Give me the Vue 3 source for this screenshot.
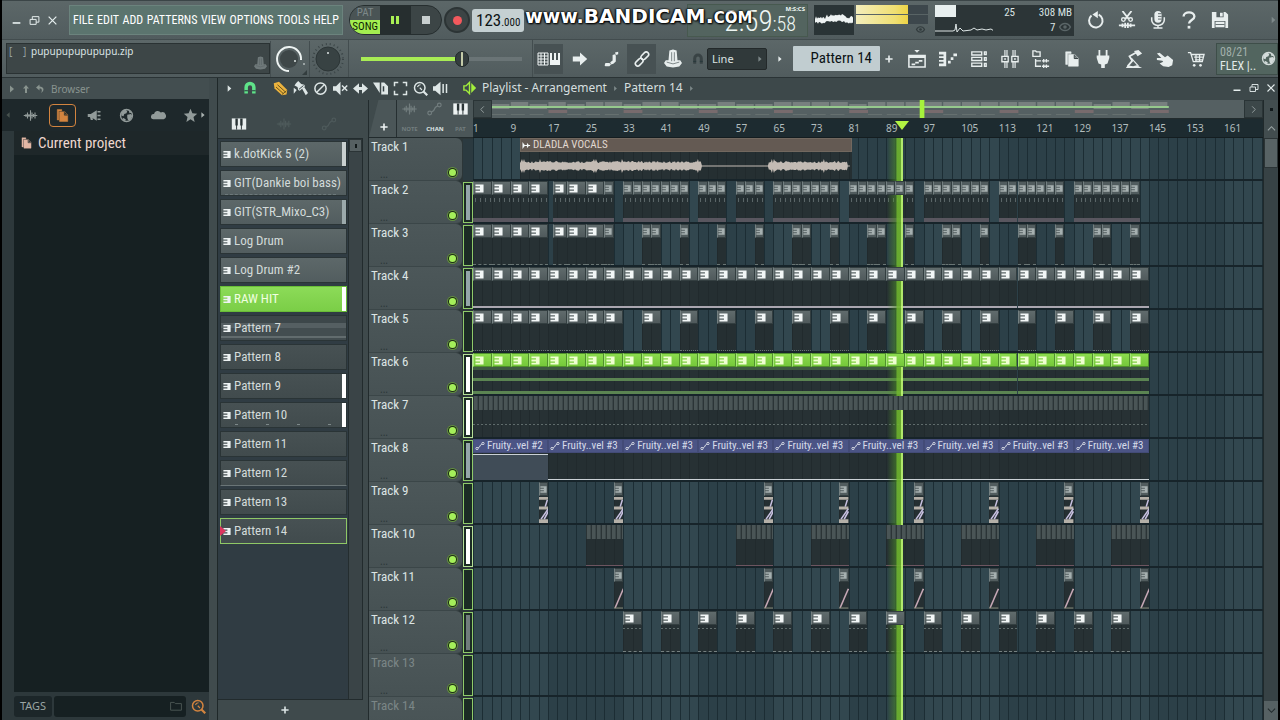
<script setup>
import { h } from 'vue'

const icons = {
  wave: '<path d="M1 10h18M4 8v4M6 6v8M8 8v4M10 3v14M12 6v8M14 8v4M16 6v8" fill="none" stroke="currentColor" stroke-width="1.5"/>',
  files: '<path d="M3 2h6v2H5v12H3zM6 5h7l4 4v9H6zM13 5v4h4" fill="currentColor" stroke="currentColor" stroke-width=".6"/><path d="M12.500 5v4.500H17" fill="none" stroke="#1e292b"/>',
  plugSpk: '<path d="M1 8h4l8-5v14l-8-5H1zM4 12h3l1 4H5zM14 4h4v2h-4zM14 9h4v2h-4zM14 14h4v2h-4z" fill="currentColor"/>',
  globe: '<circle cx="10" cy="10" r="8" fill="none" stroke="currentColor" stroke-width="1.800"/><path d="M3 6l5-4 3 2-1 3-3 1-1 3-3-1zM11 9l5-1 2 3-4 6-2-1-1-3zM13 3l4 3-3 1zM5 13l4 2-1 3-3-3z" fill="currentColor"/>',
  cloud: '<path d="M3 15a3.500 3.500 0 0 1 1-7 5 5 0 0 1 9-2 4.500 4.500 0 0 1 4 9z" fill="currentColor"/>',
  star: '<path d="M10 1l2.500 6 6.500.5-5 4.500 1.500 6.500L10 15l-5.500 3.500L6 12 1 7.500 7.500 7z" fill="currentColor"/>',
  piano: '<path d="M1 3h18v14H1z" fill="currentColor"/><path d="M7 11v6M13 11v6" stroke="#2a3436" stroke-width="1.200"/><path d="M5.500 3h3v9h-3zM11.500 3h3v9h-3z" fill="#2a3436"/>',
  auto: '<circle cx="4" cy="15" r="2.300" fill="none" stroke="currentColor" stroke-width="1.500"/><circle cx="16" cy="5" r="2.300" fill="none" stroke="currentColor" stroke-width="1.500"/><path d="M6 14l3-2 2-4 3-2" fill="none" stroke="currentColor" stroke-width="1.500"/>',
  up: '<path d="M10 2l6 7h-4v9H8V9H4z" fill="currentColor"/>',
  undo: '<path d="M9 1L2 7l7 6V9c5 0 6 4 3 9 8-5 6-13-3-13z" fill="currentColor"/>',
  play: '<path d="M6 3l8 7-8 7z" fill="currentColor"/>',
  left: '<path d="M14 3l-8 7 8 7z" fill="currentColor"/>',
  magnet: '<path d="M2 18V9a8 8 0 0 1 16 0v9h-5V9a3 3 0 0 0-6 0v9z" fill="currentColor"/><path d="M2 14h5M13 14h5" stroke="#26383a" stroke-width="1.500"/>',
  pencil: '<path d="M1 3l7-2 11 11-1 6-6 1L2 10z" fill="currentColor"/><path d="M4 8l10 9M6 5l11 10M12 18l6-5" stroke="#5a4a18" stroke-width="1.200"/>',
  brush: '<path d="M4 3l3-3 4 4 4 1 1 2-7 6-2-1-1-4-4-2z" fill="currentColor"/><path d="M12 10l3-2 5 8-3 3zM1 9l4 3-4 5z" fill="currentColor"/><path d="M8 11l6-5" stroke="#3d484a" stroke-width="1.300"/>',
  ban: '<circle cx="10" cy="10" r="7.500" fill="none" stroke="currentColor" stroke-width="2"/><path d="M5 15L15 5" stroke="currentColor" stroke-width="2"/>',
  mute: '<path d="M0 7h4l6-6v18l-6-6H0z" fill="currentColor"/><path d="M12 6l7 7M19 6l-7 7" stroke="currentColor" stroke-width="2"/>',
  slip: '<path d="M0 10l8-7v5h4V3l8 7-8 7v-5H8v5z" fill="currentColor"/>',
  slice: '<path d="M0 2h9v14zM11 2h4l5 5v11h-9z" fill="currentColor"/><path d="M14 7v7" stroke="#333f42" stroke-width="2"/>',
  select: '<path d="M2 7V2h5M13 2h5v5M18 13v5h-5M7 18H2v-5" fill="none" stroke="currentColor" stroke-width="2"/>',
  zoom: '<circle cx="9" cy="9" r="7" fill="none" stroke="currentColor" stroke-width="2"/><path d="M14 14l5 5" stroke="currentColor" stroke-width="3"/><path d="M6 8a4 4 0 0 1 4-3M12 12L9 9" fill="none" stroke="currentColor" stroke-width="1.500"/>',
  playback: '<path d="M0 7h3l7-6v18l-7-6H0zM12.500 4h2v12h-2zM17 4h2v12h-2z" fill="currentColor"/>',
  speaker: '<path d="M2 7h3l5-5v16l-5-5H2z" fill="none" stroke="currentColor" stroke-width="2"/><path d="M12.500 3l7 7-7 7z" fill="currentColor"/>',
  arrow: '<path d="M1 7h9V2l9 8-9 8v-5H1z" fill="currentColor"/>',
  slide: '<path d="M2 18l1-3h5l2 2-2 2H3zM10 17l-1-3 3-2V5l3-1 1 2v7l-3 3zM15 2l4-1v3l-3 1z" fill="currentColor"/>',
  link: '<g fill="none" stroke="currentColor" stroke-width="2"><rect x="8" y="3" width="11" height="6" rx="3" transform="rotate(-45 13.500 6)"/><rect x="1" y="11" width="11" height="6" rx="3" transform="rotate(-45 6.500 14)"/></g>',
  stamp: '<path d="M6 1l4-1 4 1 1 11h3l2 3-3 4-7 1-7-1-3-4 2-3h3z" fill="currentColor"/><path d="M8.500 3v10M11.500 3v10M3 14l7 2 7-2" fill="none" stroke="#566163" stroke-width=".8"/>',
  playlist: '<path d="M7 0h6l-3 3z" fill="currentColor"/><path d="M1 6h18v13H1z" fill="none" stroke="currentColor" stroke-width="1.700"/><path d="M1 6h18v3H1zM4 15h4v2H4zM8 13h4v2H8zM12 11h4v2h-4z" fill="currentColor"/>',
  roll: '<path d="M0 2h8v16H0v-3h5v-2H0v-2h5V9H0V7h5V5H0zM10 12h3v3h-3zM13 8h3v3h-3zM16 4h4v3h-4z" fill="currentColor"/>',
  rack: '<path d="M2 2h11v3.500H2zM2 8.200h11v3.500H2zM2 14.500h11V18H2zM16 2h2v3h-2zM16 8.500h2v3h-2zM16 15h2v3h-2z" fill="none" stroke="currentColor" stroke-width="1.500"/>',
  mixer: '<path d="M5.500 0v20M14.500 0v20" stroke="currentColor" stroke-width="3.600"/><path d="M5.500 0v20M14.500 0v20" stroke="#566163" stroke-width="1"/><path d="M1 7h7v6H1zM12 7h7v6h-7z" fill="#566163" stroke="currentColor" stroke-width="1.500"/><path d="M4.500 9v2M15.500 9v2" stroke="currentColor" stroke-width="1.500"/>',
  tree: '<path d="M1 1h3l1 1h4v5H1zM4 10v8h6M4 12h6M11 12h8M11 18h8M13 10v4M16 10v4M13 16v4M16 16v4" fill="none" stroke="currentColor" stroke-width="1.500"/>',
  plug: '<path d="M5 0h2v6h6V0h2v6h2v3l-2 6-3 1v4H8v-4l-3-1-2-6V6h2z" fill="currentColor"/>',
  lamp: '<path d="M12 3L5 7l3 5-5 6" fill="none" stroke="currentColor" stroke-width="2"/><path d="M10 1l5-1 4 4-5 3zM1 20l2-3 6 1 4-1 6 3z" fill="currentColor"/><path d="M7 9l8 9" stroke="currentColor" stroke-width="1.300"/>',
  hand: '<path d="M1 4l3-1 6 5 3-2 6 5-1 6-4 2-6-1-4-3 4-2-1-1-6-1v-2l5 0z" fill="currentColor"/>',
  cart: '<path d="M1 3h3l3 10h10l2-8H5M8 8h10M9 11h8M10 5v8M14 5v8" fill="none" stroke="currentColor" stroke-width="1.400"/><circle cx="8" cy="17" r="1.500" fill="currentColor"/><circle cx="15" cy="17" r="1.500" fill="currentColor"/>',
  refresh: '<path d="M5 5a7.500 7.500 0 1 0 8-1" fill="none" stroke="currentColor" stroke-width="2.200"/><path d="M12 0v8L6 4z" fill="currentColor"/>',
  cut: '<path d="M5 0l7 9M15 0L8 9M1 16h18M5 14v4M8 13v6M11 13v6M14 14v4" stroke="currentColor" stroke-width="2" fill="none"/><circle cx="6" cy="9.500" r="2" fill="none" stroke="currentColor" stroke-width="1.500"/><circle cx="14" cy="9.500" r="2" fill="none" stroke="currentColor" stroke-width="1.500"/>',
  mic: '<rect x="6" y="0" width="8" height="13" rx="4" fill="currentColor"/><path d="M3 7v3a7 6 0 0 0 14 0V7M10 16v3M5 19h10" fill="none" stroke="currentColor" stroke-width="1.700"/><path d="M10 3h4M10 6h4M10 9h4" stroke="#566163"/>',
  help: '<path d="M4 6c0-6 12-6 12 0 0 4-6 4-6 8" fill="none" stroke="currentColor" stroke-width="2.600"/><path d="M8.500 16.500h3v3h-3z" fill="currentColor"/>',
  save: '<path d="M1 1h15l3 3v15H1z" fill="currentColor"/><path d="M6 1h8v6H6zM4 11h12v8H4z" fill="#566163"/><path d="M10 2h3v4h-3zM5 12h10v6H5z" fill="currentColor"/><path d="M5 15h10" stroke="#566163"/>',
  folder: '<path d="M1 4h6l2 2h10v11H1z" fill="none" stroke="currentColor" stroke-width="1.500"/>',
  min: '<path d="M3 13h14v3H3z" fill="currentColor"/>',
  restore: '<path d="M2 8h11v9H2zM6 8V3h12v10h-5" fill="none" stroke="currentColor" stroke-width="1.800"/>',
  close: '<path d="M3 3l14 14M17 3L3 17" stroke="currentColor" stroke-width="2.200"/>',
  chevL: '<path d="M13 3l-7 7 7 7" fill="none" stroke="currentColor" stroke-width="2"/>',
  chevR: '<path d="M7 3l7 7-7 7" fill="none" stroke="currentColor" stroke-width="2"/>',
  chevU: '<path d="M2 14l8-8 8 8" fill="none" stroke="currentColor" stroke-width="2.500"/>',
  chevD: '<path d="M2 6l8 8 8-8" fill="none" stroke="currentColor" stroke-width="2.500"/>',
  plus: '<path d="M10 1v18M1 10h18" stroke="currentColor" stroke-width="4"/>',
  keys: '<path d="M1 1h18v18H1v-4h10v-3H1V8h10V5H1z" fill="currentColor"/>',
  sample: '<path d="M1 2l6 8-6 8zM6 9h12v2H6zM11 4l5 6-5 6z" fill="currentColor"/>',
  eye: '<path d="M1 10c4-8 14-8 18 0-4 8-14 8-18 0z" fill="none" stroke="currentColor" stroke-width="2.500"/><circle cx="10" cy="10" r="3" fill="currentColor"/>',
}
const Icon = (p) => h('svg', { viewBox: '0 0 20 20', class: 'ic', 'aria-hidden': 'true', innerHTML: icons[p.n] })
Icon.props = ['n']

const menus = ['FILE', 'EDIT', 'ADD', 'PATTERNS', 'VIEW', 'OPTIONS', 'TOOLS', 'HELP']
const topTools = ['refresh', 'cut', 'mic', 'help', 'save']
const windowTools = ['playlist', 'roll', 'rack', 'mixer', 'tree', 'files', 'plug', 'lamp', 'hand', 'cart']
const playTools = ['pencil', 'brush', 'ban', 'mute', 'slip', 'slice', 'select', 'zoom', 'playback']
const tabs = ['wave', 'files', 'plugSpk', 'globe', 'cloud', 'star']

const patterns = [
  { name: 'k.dotKick 5 (2)', tone: 'lit', mark: 'pale' },
  { name: 'GIT(Dankie boi bass)', tone: 'lit dots' },
  { name: 'GIT(STR_Mixo_C3)', tone: 'lit', mark: 'grey' },
  { name: 'Log Drum', tone: 'lit' },
  { name: 'Log Drum #2', tone: 'lit' },
  { name: 'RAW HIT', tone: 'green', mark: 'white' },
  { name: 'Pattern 7', tone: 'striped' },
  { name: 'Pattern 8', tone: '' },
  { name: 'Pattern 9', tone: '', mark: 'white' },
  { name: 'Pattern 10', tone: 'sparse', mark: 'white' },
  { name: 'Pattern 11', tone: '' },
  { name: 'Pattern 12', tone: 'under' },
  { name: 'Pattern 13', tone: '' },
  { name: 'Pattern 14', tone: 'current' },
]

const TOTAL = 168.3
const range = (from, to, step) => {
  const out = []
  for (let i = from; i < to; i += step) out.push(i)
  return out
}
const full = (starts, len = 4) => starts.map((at) => ({ at, len, icon: true }))
const small = (starts) => starts.map((at) => ({ at, len: 2, icon: true, dim: true }))
const intro = [...full([0, 4, 8, 12]), { at: 17, len: 3, icon: true }, ...full([20, 24]), ...small([28])]
const everyFour = full(range(0, 144, 4))
const endings = [30, 62, 78, 94, 110, 126, 142]

const tracks = [
  { kind: 'audio', meter: 'none', clips: [{ at: 10, len: 70.7, label: 'DLADLA VOCALS' }] },
  {
    kind: 'beat', meter: 'blue',
    clips: [...intro, ...small([
      ...range(32, 46, 2), 48, 50, 52, 56, 58, 60, ...range(64, 78, 2), ...range(80, 94, 2),
      ...range(96, 110, 2), ...range(112, 126, 2), ...range(128, 142, 2),
    ])],
  },
  {
    kind: 'bass', meter: 'off',
    clips: [...intro, ...small([36, 38, 44, 52, 60, 68, 70, 76, 84, 86, 92, 100, 102, 108, 116, 118, 124, 132, 134, 140])],
  },
  { kind: 'chord', meter: 'blue', clips: everyFour },
  { kind: 'drum', meter: 'off', clips: full([...range(0, 32, 4), ...range(36, 144, 8)]) },
  { kind: 'hit', meter: 'white', clips: everyFour },
  { kind: 'hat', meter: 'white', clips: [{ at: 0, len: 144 }] },
  {
    kind: 'fruity', meter: 'blue',
    clips: range(0, 144, 16).map((at, i) => ({ at, len: 16, label: 'Fruity..vel #' + (i ? 3 : 2), first: !i })),
  },
  { kind: 'fill', meter: 'off', clips: small([14, ...endings]) },
  { kind: 'perc', meter: 'white', clips: [24, 56, 72, 88, 104, 120, 136].map((at) => ({ at, len: 8 })) },
  { kind: 'rise', meter: 'off', clips: small(endings) },
  { kind: 'shaker', meter: 'grey', clips: full(range(32, 144, 8)) },
  { kind: 'empty', meter: 'off', clips: [] },
  { kind: 'empty', meter: 'off', clips: [] },
]
const ruler = range(1, 162, 8)
const pct = (v) => (v / TOTAL) * 100 + '%'
const place = (c) => ({ left: pct(c.at), width: pct(c.len) })

// Mirrored amplitude outline: loud phrase, silence, second phrase.
const noise = (i) => Math.abs(Math.sin(i * 12.9898) * 43758.5453) % 1
const wavePath = (() => {
  const top = []
  const bottom = []
  for (let x = 0; x <= 330; x += 1) {
    const loud = x < 182 || (x > 248 && x < 328)
    const peak = [2, 4, 20, 74, 76, 102, 178, 252, 254, 304].includes(x)
    const a = loud ? (peak ? 7 : 3 + noise(x) * 2) : 0.5
    top.push(`${x} ${12 - a}`)
    bottom.unshift(`${x} ${12 + a}`)
  }
  return 'M' + top.concat(bottom).join('L') + 'Z'
})()
const scopePath = (() => {
  const top = []
  const bottom = []
  for (let x = 0; x <= 38; x += 1) {
    const mid = 15 - (x > 10 && x < 30 ? 2 : 0)
    top.push(`${x} ${mid - 1 - noise(x) * 3}`)
    bottom.unshift(`${x} ${mid + 2 + noise(x + 9) * 2}`)
  }
  return 'M' + top.concat(bottom).join('L') + 'Z'
})()
const overview = range(0, 144, 4).map((at, i) => ({ at, y: noise(i) > 0.4 ? 2 : 4, foot: i % 4 === 3 }))
</script>

<template>
  <div class="daw">
    <header class="top">
      <div class="bar">
        <div class="winbtns">
          <button aria-label="Minimize"><Icon n="min" /></button>
          <button aria-label="Restore"><Icon n="restore" /></button>
          <button aria-label="Close"><Icon n="close" /></button>
        </div>
        <nav class="menu"><a v-for="m in menus" :key="m" href="#">{{ m }}</a></nav>
        <div class="transport">
          <button class="mode"><span>PAT</span><b>SONG</b></button>
          <button class="pause" aria-label="Pause"><i></i><i></i></button>
          <button class="stop" aria-label="Stop"><i></i></button>
        </div>
        <button class="rec" aria-label="Record"><i></i></button>
        <div class="tempo"><span>123<small>.000</small></span></div>
        <div class="snap"></div>
        <div class="clock"><span class="big">2:59</span><span class="sec">:58</span><span class="unit">M:S:CS</span></div>
        <div class="scope"><svg viewBox="0 0 38 30"><path :d="scopePath" fill="#eef3f3" /></svg></div>
        <div class="meters"><div><i></i></div><div><i></i></div><Icon n="eye" /></div>
        <div class="cpu">
          <svg viewBox="0 0 58 30"><path d="M0 0h21v12H0z" fill="#e8efef" /><path d="M0 26h18l2-1 1-6 1 8 3-4 3 3 8-1 3-2 3 2 5-1 4 1 5-1 3 2" fill="none" stroke="#dfe7e7" /></svg>
          <div class="nums"><span>25</span><span>308 MB</span><span></span><span>7 <Icon n="eye" /></span></div>
        </div>
        <div class="tools first"><button v-for="t in topTools" :key="t" :aria-label="t"><Icon :n="t" /></button></div>
        <button class="more" aria-label="More"><Icon n="play" /></button>
        <div class="watermark"><span>www.</span><strong>BANDICAM</strong><em>.com</em></div>
      </div>
      <div class="bar second">
        <div class="hint"><span class="br">[</span><span class="br">]</span><span>pupupupupupupu.zip</span><Icon n="stamp" /></div>
        <div class="knob"><svg viewBox="0 0 36 36"><circle cx="17" cy="18" r="9" fill="#3e4748" /><path d="M17 30A12 12 0 1 1 29 19" fill="none" stroke="#eef4f3" stroke-width="2" /><circle cx="23" cy="20" r="1" fill="#dfe6e5" /><circle cx="32" cy="23" r="1" fill="#b3bbbb" /><path d="M35 29v5h-5z" fill="#333d3e" /></svg></div>
        <div class="knob"><svg viewBox="0 0 36 36"><circle cx="17" cy="18" r="15" fill="none" stroke="#3b4547" stroke-dasharray="1 3" stroke-width="2" /><circle cx="17" cy="18" r="12" fill="#384243" stroke="#2c3536" /><circle cx="17" cy="12" r="1" fill="#dfe6e5" /></svg></div>
        <label class="pitch"><input type="range" min="0" max="100" value="64" aria-label="Song position" /></label>
        <div class="tools left">
          <button class="on" aria-label="Typing keyboard"><svg class="wide" viewBox="0 0 24 16"><path d="M1 2h10v12H1zM1 5h10M1 8h10M1 11h10M4 2v12M7.500 2v12" fill="none" stroke="#eef3f3" /><path d="M13 2h10v12H13z" fill="#eef3f3" /><path d="M16 2v7M20 2v7" stroke="#465052" stroke-width="2" /></svg></button>
          <button aria-label="Step"><Icon n="arrow" /></button>
          <button aria-label="Slide"><Icon n="slide" /></button>
          <button class="on" aria-label="Link"><Icon n="link" /></button>
          <button aria-label="Stamp"><Icon class="big" n="stamp" /></button>
        </div>
        <div class="snapsel"><Icon n="magnet" /><select aria-label="Snap"><option>Line</option></select><Icon class="dd" n="play" /></div>
        <button class="pbtn" aria-label="Previous"><Icon n="play" /></button>
        <select class="patsel" aria-label="Pattern"><option>Pattern 14</option></select>
        <button class="pbtn" aria-label="Add pattern"><Icon n="plus" /></button>
        <div class="tools win"><button v-for="t in windowTools" :key="t" :aria-label="t"><Icon :n="t" /></button></div>
        <div class="news"><p><span>08/21</span><b>FLEX |..</b></p><Icon n="globe" /></div>
      </div>
    </header>

    <main>
      <aside class="browser">
        <div class="bhead"><Icon n="play" /><Icon n="up" /><Icon n="undo" /><span>Browser</span></div>
        <div class="btabs">
          <Icon class="edge" n="left" />
          <button v-for="t in tabs" :key="t" :class="{ sel: t === 'files' }" :aria-label="t"><Icon :n="t" /></button>
          <Icon class="edge lit" n="play" />
        </div>
        <div class="blist"><a href="#"><Icon n="files" />Current project</a></div>
        <div class="bfoot">
          <button class="tags">TAGS</button>
          <label class="find"><input aria-label="Search" /><Icon n="folder" /></label>
          <button class="go" aria-label="Find"><Icon n="zoom" /></button>
        </div>
      </aside>

      <section class="playlist">
        <div class="phead">
          <Icon class="tri" n="play" /><Icon class="mag" n="magnet" />
          <div class="ptools"><button v-for="t in playTools" :key="t" :class="t" :aria-label="t"><Icon :n="t" /></button></div>
          <Icon class="spk" n="speaker" />
          <h1>Playlist - Arrangement <Icon n="play" /> Pattern 14 <Icon n="play" /></h1>
          <div class="winbtns small">
            <button aria-label="Minimize"><Icon n="min" /></button>
            <button aria-label="Restore"><Icon n="restore" /></button>
            <button aria-label="Close"><Icon n="close" /></button>
          </div>
        </div>
        <div class="pbody">
          <div class="picker">
            <div class="phd"><Icon n="piano" /><Icon class="off" n="wave" /><Icon class="off" n="auto" /></div>
            <div class="plist">
              <div class="items">
                <button v-for="p in patterns" :key="p.name" :class="p.tone">
                  <Icon n="keys" />{{ p.name }}<i v-if="p.mark" :class="p.mark"></i>
                </button>
              </div>
              <div class="pscroll"><i></i></div>
            </div>
            <button class="addp" aria-label="Add"><Icon n="plus" /></button>
          </div>

          <div class="arr">
            <div class="arrhead">
              <div class="corner">
                <button class="addt" aria-label="Add track"><Icon n="plus" /></button>
                <div class="filters">
                  <span><Icon n="wave" />NOTE</span><span class="on"><Icon n="auto" />CHAN</span><span><Icon class="lit" n="piano" />PAT</span>
                </div>
              </div>
              <div class="timehead">
                <div class="over">
                  <button aria-label="Scroll left"><Icon n="chevL" /></button>
                  <svg viewBox="0 0 160 18" preserveAspectRatio="none">
                    <g v-for="o in overview" :key="o.at">
                      <rect :x="o.at" :y="o.y" width="3.700" height="5" fill="#78807f" />
                      <rect v-if="o.foot" :x="o.at" y="10" width="4" height="3" fill="#786b6d" />
                      <rect v-if="!o.foot" :x="o.at" y="14" width="3" height="1" fill="#66706f" />
                    </g>
                    <rect y="6" width="144" height="2" fill="#96c98d" />
                    <rect x="91" width="1" height="18" fill="#a6f23c" />
                  </svg>
                  <button aria-label="Scroll right"><Icon n="chevR" /></button>
                </div>
                <div class="ruler">
                  <span v-for="n in ruler" :key="n" :style="{ left: pct(n - 1) }">{{ n }}</span>
                  <i :style="{ left: pct(91.4) }"></i>
                </div>
              </div>
              <div class="cornerR"><b></b><Icon n="chevU" /></div>
            </div>
            <div class="arrbody">
              <div class="heads">
                <div v-for="(t, i) in tracks" :key="i" class="head" :class="{ faint: i > 11 }">
                  <div class="cell"><span>Track {{ i + 1 }}</span><em v-if="i < 13">...</em><i></i></div>
                  <div class="vu" :class="t.meter"><i></i></div>
                </div>
              </div>
              <div class="canvas">
                <div v-for="(t, i) in tracks" :key="i" class="lane" :class="t.kind">
                  <div v-for="c in t.clips" :key="c.at" class="clip" :class="{ dim: c.dim, first: c.first }" :style="place(c)">
                    <div class="cap">
                      <Icon v-if="t.kind === 'audio'" n="sample" /><Icon v-else-if="c.label" n="auto" /><Icon v-else-if="c.icon" n="keys" />
                      <span v-if="c.label">{{ c.label }}</span>
                    </div>
                    <svg v-if="t.kind === 'audio'" class="audiowave" viewBox="0 0 332 24" preserveAspectRatio="none"><path :d="wavePath" fill="#c3bbb4" /></svg>
                    <svg v-else-if="t.kind === 'fill'" class="shape" viewBox="0 0 9 28" preserveAspectRatio="none"><path d="M0 1h9v3H0zM0 11h9v3H0zM0 24h9v4H0z" fill="#b5b0a8" /><path d="M8 4L6 11M9 13L2 24M9 16L5 24" fill="none" stroke="#c7c0e0" stroke-width="1.500" /></svg>
                    <svg v-else-if="t.kind === 'rise'" class="shape" viewBox="0 0 9 28" preserveAspectRatio="none"><path d="M1 27L9 7" fill="none" stroke="#c6a8b6" stroke-width="1.500" /><path d="M0 27h9" stroke="#8d9482" /></svg>
                    <div v-else class="body"></div>
                  </div>
                </div>
                <div class="playhead" :style="{ left: pct(91.5) }"></div>
              </div>
              <div class="vscroll"><b></b><span><Icon n="chevD" /></span></div>
            </div>
          </div>
        </div>
      </section>
    </main>
  </div>
</template>

<style>
html, body { background: #000; overflow: hidden; }
</style>

<style scoped>
* { box-sizing: border-box; }
button, input, select { font: inherit; color: inherit; background: none; border: 0; padding: 0; margin: 0; }
button { display: flex; align-items: center; justify-content: center; }
a { color: inherit; text-decoration: none; }
i { display: block; font-style: normal; }
.ic { width: 12px; height: 12px; flex: none; display: block; }
.daw {
  --narrow: "Roboto Condensed", "Open Sans Condensed", "Liberation Sans Narrow", "Liberation Sans", sans-serif;
  height: 100vh; padding: 0 2px; background: #000; overflow: hidden; display: flex; flex-direction: column;
  font: 12px/16px "Noto Sans", sans-serif; color: #dbe4e4;
}
.top { flex: none; background: #566163; }
.bar { height: 39px; display: flex; align-items: center; position: relative; background: linear-gradient(#5c6768, #515c5e); border-top: 1px solid #3b4547; }
.second { border-top: 1px solid #424c4e; border-bottom: 1px solid #2a3335; }
.winbtns { display: flex; gap: 7px; margin: 0 11px 0 9px; color: #e6eeee; }
.winbtns .ic { width: 11px; height: 11px; }
.menu { width: 274px; height: 30px; flex: none; background: #5b746e; border: 1px solid #6b837d; display: flex; align-items: center; justify-content: space-between; padding: 0 3px; font: 12px/20px var(--narrow); color: #fff; }
.transport { display: flex; margin-left: 6px; height: 30px; width: 93px; flex: none; border-radius: 15px; overflow: hidden; border: 1px solid #262e2f; background: #3c4546; }
.transport button { flex: 1; min-width: 0; }
.mode { flex-direction: column; font: 11px/14px var(--narrow); background: #4a5455; }
.mode span { color: #7d8889; }
.mode b { width: 100%; background: #a3ee50; color: #0c1c03; font-weight: 400; }
.pause { gap: 2px; background: #262e2f; }
.pause i { width: 3px; height: 8px; background: #a9ef54; }
.stop i { width: 8px; height: 8px; background: #c8cfcf; }
.rec { width: 26px; height: 26px; border-radius: 50%; background: #3c4445; border: 2px solid #2c3435; margin: 0 2px; flex: none; }
.rec i { width: 9px; height: 9px; border-radius: 50%; background: #f4595d; }
.tempo { width: 52px; height: 23px; flex: none; border-radius: 3px; background: #c5d0d2; color: #0c1214; padding-left: 4px; font: 17px/23px var(--narrow); white-space: nowrap; }
.tempo small { font-size: 11px; }
.snap { width: 163px; flex: none; }
.clock { width: 121px; height: 33px; flex: none; border: 1px solid #47594f; background: #53645f; display: flex; align-items: baseline; justify-content: flex-end; padding-right: 11px; position: relative; color: #eef6f3; font-family: var(--narrow); font-weight: 300; }
.big { font-size: 29px; line-height: 32px; }
.sec { font-size: 20px; line-height: 32px; }
.unit { position: absolute; top: 0; right: 2px; font: bold 6px/8px "Noto Sans", sans-serif; }
.scope { width: 40px; height: 30px; flex: none; background: #2a3436; margin-left: 6px; }
.scope svg { width: 100%; height: 100%; display: block; }
.meters { width: 72px; height: 30px; flex: none; margin-left: 2px; display: grid; grid-template-rows: 9px 9px 1fr; gap: 1px; color: #323b3d; }
.meters div { background: #3d474c; }
.meters i { width: 72%; height: 9px; background: linear-gradient(90deg, #f3edbb, #efdf72 75%, #eed445); }
.meters .ic { justify-self: end; width: 11px; height: 9px; margin-right: 2px; }
.cpu { width: 139px; height: 31px; flex: none; margin-left: 7px; background: #2c3537; display: flex; }
.cpu > svg { width: 58px; height: 30px; }
.nums { flex: 1; display: grid; grid-template-columns: 22px 1fr; font: 11px/15px var(--narrow); text-align: right; padding-right: 2px; }
.nums .ic { display: inline-block; vertical-align: -2px; color: #5a6567; width: 14px; }
.tools { display: flex; color: #e8eeee; }
.tools button { width: 31px; height: 30px; }
.tools .ic { width: 18px; height: 18px; }
.tools.first { margin-left: 6px; }
.more { margin-left: auto; color: #7e898a; }
.more .ic { width: 9px; }
.watermark { position: absolute; left: 41%; top: 3px; display: flex; align-items: baseline; color: #fff; font: bold 19px/24px "DejaVu Sans", sans-serif; text-shadow: 0 0 2px #000, 1px 1px 2px #000, -1px 0 2px #000; }
.watermark strong { font-size: 20px; }
.watermark em { font-style: normal; font-size: 22px; font-variant: small-caps; }
.hint { margin-left: 4px; width: 264px; height: 31px; flex: none; background: #3d4647; border: 1px solid #2a3233; display: flex; align-items: flex-start; font: 10px/14px "Noto Sans", sans-serif; padding-left: 2px; }
.hint .br { width: 14px; color: #96a1a1; }
.hint .br + .br { width: 8px; }
.hint .ic { margin: 11px 2px 0 auto; width: 13px; height: 16px; color: #6f797a; }
.knob { width: 39px; height: 36px; flex: none; border-left: 1px solid #434d4f; display: flex; justify-content: center; }
.knob svg { width: 36px; height: 36px; }
.pitch { width: 185px; height: 37px; flex: none; border-left: 1px solid #434d4f; border-right: 1px solid #434d4f; padding: 0 10px 0 12px; display: flex; align-items: center; }
.pitch input { appearance: none; width: 100%; height: 4px; background: linear-gradient(90deg, #a8ec55 64%, #6a7476 64%); }
.pitch input::-webkit-slider-thumb { appearance: none; width: 14px; height: 16px; border-radius: 8px; border: 1px solid #1e2627; background: linear-gradient(90deg, #343d3e 5px, #c4cba9 5px, #c4cba9 7px, #343d3e 7px); }
.tools.left .on { background: #475153; }
.tools.left button { height: 30px; width: 29px; margin: 0 1px; }
.tools.left .wide { width: 24px; height: 16px; }
.tools.left .ic { width: 16px; height: 16px; }
.tools.left .ic.big { width: 18px; height: 19px; }
.snapsel { display: flex; align-items: center; position: relative; margin-left: 4px; gap: 3px; color: #394345; }
.snapsel select { appearance: none; width: 60px; height: 22px; background: #30393a; border: 1px solid #23292a; border-radius: 2px; color: #dbe3e3; padding-left: 4px; font-size: 11px; }
.dd { position: absolute; right: 3px; width: 8px; height: 8px; color: #7c8788; }
.pbtn { width: 26px; height: 20px; flex: none; color: #e8eeee; }
.pbtn .ic { width: 8px; height: 8px; }
.patsel { appearance: none; width: 87px; height: 25px; flex: none; background: #c1cdd0; color: #0c1214; border-radius: 1px; font: 15px/23px var(--narrow); text-align: right; text-align-last: right; padding-right: 8px; }
.patsel + .pbtn { width: 18px; }
.tools.win { margin-left: 3px; }
.news { margin-left: auto; width: 62px; height: 32px; flex: none; background: #52655f; border: 1px solid #3e4e49; display: flex; align-items: center; justify-content: space-between; padding: 0 1px 0 3px; }
.news p { margin: 0; font: 12px/14px var(--narrow); display: grid; color: #e3ebe9; white-space: nowrap; }
.news p span { color: #a2b0ab; }
.news b { font-weight: 400; }
.news .ic { width: 15px; height: 15px; color: #d3dcda; }

main { flex: 1; min-height: 0; display: flex; background: #404b4d; }
.browser { width: 207px; flex: none; display: flex; flex-direction: column; background: #2d383b; }
.bhead { height: 21px; flex: none; display: flex; align-items: center; gap: 4px; padding-left: 5px; background: #434e50; color: #89948f; font-size: 10px; }
.bhead .ic { width: 10px; height: 10px; }
.bhead span { margin-left: 2px; }
.btabs { height: 32px; flex: none; display: flex; align-items: center; background: #1e282b; color: #929b9a; gap: 5px; padding: 0 2px; }
.btabs button { width: 27px; height: 23px; border: 1px solid transparent; border-radius: 4px; flex: none; }
.btabs .ic { width: 15px; height: 15px; }
.btabs .edge { width: 8px; height: 8px; color: #48534f; }
.btabs .lit { color: #a9b2b0; margin-left: -10px; }
.btabs .sel { border-color: #d3843f; color: #d3843f; }
.blist { flex: 1; margin-left: 12px; background: #162022; }
.blist a { display: flex; align-items: center; gap: 5px; height: 24px; padding-left: 6px; background: #1e2729; color: #eed8cf; font: 15px/20px var(--narrow); }
.blist .ic { width: 13px; height: 14px; color: #e3b7a5; }
.bfoot { height: 28px; flex: none; margin-left: 12px; display: flex; align-items: center; gap: 2px; color: #9aa5a3; }
.tags { width: 38px; height: 21px; background: #1c2629; border-radius: 3px; font-size: 11px; }
.find { width: 132px; height: 21px; background: #162022; border-radius: 3px; display: flex; align-items: center; padding-right: 4px; color: #4e5957; }
.find input { flex: 1; min-width: 0; }
.go { color: #d3843f; margin-left: 3px; }
.go .ic { width: 15px; height: 15px; }

.playlist { flex: 1; min-width: 0; margin-left: 8px; border-left: 1px solid #1f2829; display: flex; flex-direction: column; background: #3f4a4c; }
.phead { height: 22px; flex: none; display: flex; align-items: center; background: #3d484a; color: #dee6e6; padding-bottom: 2px; }
.tri { width: 9px; height: 9px; margin-left: 7px; }
.mag { width: 14px; height: 14px; margin-left: 9px; color: #5fe389; }
.ptools { display: flex; margin-left: 13px; }
.ptools button { width: 20px; height: 20px; }
.ptools .ic { width: 15px; height: 15px; }
.ptools .pencil { color: #ecb33e; }
.spk { width: 15px; height: 14px; color: #a2ee3c; margin-left: 12px; }
h1 { margin: 0 0 0 5px; font: 12px/20px "Noto Sans", sans-serif; display: flex; align-items: center; gap: 5px; color: #d5dfdf; white-space: nowrap; }
h1 .ic { width: 7px; height: 7px; color: #7d8889; }
.small { margin: 0 2px 0 auto; }
.small .ic { width: 10px; height: 10px; }
.pbody { flex: 1; min-height: 0; display: flex; }
.picker { width: 145px; flex: none; display: flex; flex-direction: column; }
.phd { height: 38px; flex: none; display: flex; align-items: center; gap: 29px; padding: 10px 0 0 13px; color: #e8eeee; }
.phd .ic { width: 16px; height: 16px; }
.phd .off { color: #4e5a5b; }
.plist { flex: 1; min-height: 0; display: flex; background: #303c43; border: 1px solid #222b2d; border-left: 0; }
.items { flex: 1; padding: 2px 0 0 2px; display: flex; flex-direction: column; gap: 3px; background: #303c43; }
.items button { height: 26px; flex: none; width: 127px; position: relative; justify-content: flex-start; gap: 3px; padding-left: 2px; white-space: nowrap; background: linear-gradient(#475153, #414b4d); border: 1px solid #2a3436; font: 13px/16px var(--narrow); color: #d3dbda; }
.items .ic { width: 8px; height: 9px; color: #eef3f3; }
.items button i { position: absolute; right: 0; top: 0; bottom: 0; width: 4px; background: #fff; }
.items button i.pale { background: #c9d0d0; }
.items button i.grey { background: #9ba9ab; }
.items .lit { background: linear-gradient(#5d6869, #525d5f); }
.items .green { background: linear-gradient(#8cdb58, #7bce47); border-color: #69bd37; color: #f0ffe0; }
.items .striped { background: linear-gradient(#3d474a 7px, #555f62 7px, #555f62 12px, #434d50 12px, #434d50 20px, #626c6e 20px, #626c6e 22px, #434d50 22px); }
.items .dots::after { content: ""; position: absolute; left: 4px; right: 10px; bottom: 0; border-bottom: 1px dashed #6d797b; }
.items .sparse::after { content: ""; position: absolute; left: 14px; right: 10px; bottom: 2px; height: 1px; background: repeating-linear-gradient(90deg, #7d8889 0 3px, transparent 3px 31px); }
.items .under { border-bottom-color: #6a7577; }
.items .current { border-color: #8fc866; }
.items .current::before { content: ""; position: absolute; left: -1px; top: 7px; border-left: 6px solid #dd365f; border-top: 5px solid transparent; border-bottom: 5px solid transparent; }
.pscroll { width: 14px; flex: none; background: #3a4447; border-left: 1px solid #242d2f; }
.pscroll i { height: 13px; background: #566062; border: 1px solid #2b3436; display: flex; }
.pscroll i::after { content: ""; width: 2px; height: 4px; background: #12191a; margin: 4px 0 0 5px; }
.addp { height: 20px; flex: none; padding-right: 12px; }
.addp .ic { width: 8px; height: 8px; }

.arr { flex: 1; min-width: 0; margin-left: 5px; border-left: 1px solid #222b2d; display: flex; flex-direction: column; }
.arrhead { height: 38px; flex: none; display: flex; }
.corner { width: 104px; flex: none; display: flex; border-bottom: 1px solid #222b2d; }
.addt { width: 27px; background: #4b5658; clip-path: polygon(35% 0, 100% 0, 100% 100%, 0 100%); padding: 16px 0 0 3px; color: #eef3f3; }
.addt .ic { width: 8px; height: 8px; }
.filters { flex: 1; border-left: 1px solid #262f31; background: #4b5658; display: flex; justify-content: space-around; font: bold 6px/8px "Noto Sans", sans-serif; color: #727d7e; }
.filters span { display: grid; justify-items: center; align-content: space-between; padding: 1px 0 4px; }
.filters .ic { width: 17px; height: 16px; }
.filters .on { color: #dde5e5; }
.filters .on .ic { color: #727d7e; }
.filters .ic.lit { color: #eef3f3; }
.timehead { flex: 1; min-width: 0; display: flex; flex-direction: column; }
.over { height: 19px; display: flex; background: #556062; border-bottom: 1px solid #222b2d; }
.over svg:not(.ic) { flex: 1; min-width: 0; height: 18px; }
.over button { width: 19px; background: #3c4749; border: 1px solid #2a3436; color: #98a3a3; flex: none; }
.over .ic { width: 9px; height: 9px; }
.ruler { flex: 1; position: relative; background: #1d2b30; border-bottom: 1px solid #141d20; font: 10px/18px "Noto Sans", sans-serif; color: #b2bdbe; }
.ruler span { position: absolute; top: 0; }
.ruler i { position: absolute; top: 2px; margin-left: -7px; border: 7px solid transparent; border-top: 9px solid #b1f342; border-bottom: 0; }
.cornerR { width: 15px; flex: none; background: #424d4f; display: grid; grid-template-rows: 19px 19px; place-items: center; border-left: 1px solid #20292b; color: #9aa4a4; }
.cornerR b { width: 3px; height: 3px; background: #10181a; }
.cornerR .ic { width: 9px; height: 9px; }
.arrbody { flex: 1; min-height: 0; display: flex; overflow: hidden; }
.heads { width: 104px; flex: none; background: #2c3638; }
.head { height: 43px; display: flex; }
.lane { height: 43px; }
.cell { flex: 1; position: relative; background: linear-gradient(#4c5759, #475254); border-radius: 0 6px 6px 0; border-bottom: 1px solid #3b4648; font: 13px/17px var(--narrow); color: #dde5e4; padding-left: 2px; }
.cell em { position: absolute; left: 11px; bottom: 0; font: 10px/12px "Noto Sans", sans-serif; color: #2c3739; }
.cell i { position: absolute; right: 6px; bottom: 4px; width: 7px; height: 7px; border-radius: 50%; background: #a4ef5a; box-shadow: 0 0 0 1px #1d2b16, 0 0 0 2px #63913f; }
.faint .cell { color: #7b8687; }
.vu { width: 10px; flex: none; margin: 1px 0 1px 1px; border: 1px solid #8fcb6a; background: #1b2b24; padding: 2px; }
.vu i { width: 100%; height: 100%; }
.vu.none { border-color: #2b3a40; background: #2b3a40; }
.vu.blue i { background: #94a5aa; }
.vu.white i { background: #fff; }
.vu.white { border-color: #b5e097; }
.vu.grey i { background: #717c7c; }
.canvas { flex: 1; min-width: 0; position: relative; background: repeating-linear-gradient(90deg, #32474f 0, #32474f 9.507%, #2c4048 9.507%, #2c4048 19.014%); }
.lane { position: relative; border-bottom: 2px solid #17242a; background: repeating-linear-gradient(90deg, #1c2d34 0, #1c2d34 1px, transparent 1px, transparent 1.1884%); }
.clip { position: absolute; top: 0; bottom: 0; background: rgba(35, 42, 44, .76); display: flex; flex-direction: column; overflow: hidden; }
.cap { position: relative; z-index: 2; height: 14px; flex: none; background: linear-gradient(#606b6c, #505a5c); border: 1px solid #333e40; border-left-color: #748081; display: flex; align-items: center; gap: 2px; padding-left: 1px; white-space: nowrap; overflow: hidden; font: 11px/12px var(--narrow); }
.cap .ic { width: 9px; height: 9px; color: #f3f7f7; }
.dim .cap { padding-left: 0; background: #515c5e; }
.dim .cap .ic { width: 7px; color: #a6b0b0; }
.body { flex: 1; }
.audio .cap { background: #645a53; border-color: #72685f; color: #e1d9d1; }
.audiowave { width: 100%; height: 24px; margin-top: 2px; }
.shape { width: 100%; height: 27px; }
.beat .body { background: repeating-linear-gradient(90deg, transparent 0 2px, #5a6567 2px 3px, transparent 3px 5px) 0 3px / 100% 4px no-repeat; border-bottom: 4px solid #59565f; }
.bass .body { border-bottom: 1px dashed #697574; }
.chord .body { border-bottom: 2px solid #aaa6b0; }
.drum .body { border-bottom: 1px dotted #697574; }
.hit .cap { background: linear-gradient(#8bdb4d, #75c83a); border-color: #4f8f2c; border-left-color: #a5e677; }
.hit .cap .ic { color: #eeffd0; }
.hit .body { background: linear-gradient(#3f5b42 0 3px, transparent 3px 11px, #5b8452 11px 14px, transparent 14px 24px, #5b8452 24px 27px); }
.hat .cap, .perc .cap { border: 0; background: repeating-linear-gradient(90deg, #2b3436 0 1px, #4a5556 1px 4px, #3d484a 4px 5px); }
.hat .body { background: repeating-linear-gradient(90deg, #5f6b6b 0 2px, transparent 2px 4px) 0 14px / 100% 1px no-repeat; }
.perc .body { border-bottom: 1px solid #6d5560; }
.fruity .cap { background: #4b5485; border-color: #434b77; color: #d6dbe9; }
.fruity .cap .ic { width: 10px; height: 10px; }
.fruity .body { border-bottom: 1px solid #cbd1d6; }
.fruity .first .body { border-bottom: 0; border-top: 1px solid #cbd1d6; background: #404c57; margin-top: 1px; }
.shaker .body { border-bottom: 1px dashed #758080; background: repeating-linear-gradient(90deg, #5f6b6b 0 2px, transparent 2px 4px) 0 3px / 100% 1px no-repeat; }
.playhead { position: absolute; z-index: 1; top: 0; bottom: 0; width: 16px; margin-left: -16px; background: linear-gradient(90deg, rgba(80, 150, 40, 0), rgba(80, 150, 40, .6) 9px, #6fb62d 10px, #6fb62d 14px, #c0fb72 14px); opacity: .9; }
.vscroll { width: 15px; flex: none; background: #374245; border-left: 1px solid #20292b; display: flex; flex-direction: column; justify-content: space-between; }
.vscroll b { height: 30px; background: #586365; border: 1px solid #2b3436; }
.vscroll span { height: 19px; background: #566163; display: grid; place-items: center; color: #222b2d; }
.vscroll .ic { width: 9px; height: 9px; }
</style>
